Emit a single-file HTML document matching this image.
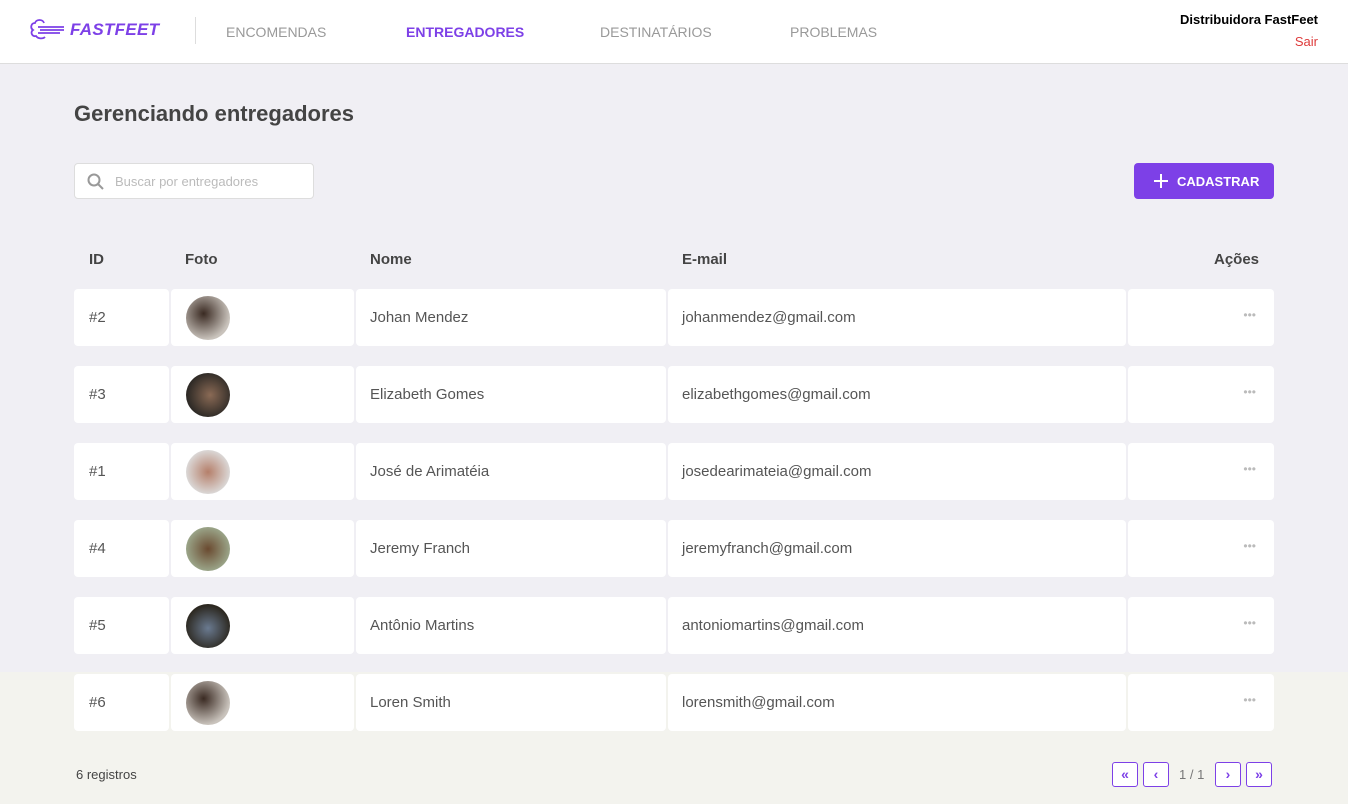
<!DOCTYPE html>
<html><head><meta charset="utf-8"><style>
*{box-sizing:border-box;margin:0;padding:0}
body{width:1348px;height:804px;overflow:hidden;font-family:"Liberation Sans",Arial,sans-serif;background:linear-gradient(#f0eff4 0,#f0eff4 672px,#f3f3ee 672px);position:relative;color:#444}
header{position:absolute;left:0;top:0;width:1348px;height:64px;background:#fff;border-bottom:1px solid #ddd}
.logo{position:absolute;left:30px;top:17px;display:flex;align-items:center;color:#7d40e7;font-weight:bold;font-style:italic;font-size:17px;letter-spacing:.3px}
.sep{position:absolute;left:195px;top:17px;width:1px;height:27px;background:#ddd}
nav a{position:absolute;top:24px;font-size:14px;color:#999;text-decoration:none}
.user{position:absolute;right:30px;top:12px;text-align:right;font-size:13px}
.user b{color:#000;display:block}
.user span{color:#de3b3b;font-size:13px;display:block;margin-top:7px}
h1{position:absolute;left:74px;top:101px;font-size:22px;color:#444}
.search{position:absolute;left:74px;top:163px;width:240px;height:36px;background:#fff;border:1px solid #ddd;border-radius:4px;font-size:13px;color:#bbb;padding:10px 0 0 40px}
.btn{position:absolute;left:1134px;top:163px;width:140px;height:36px;background:#7d40e7;border-radius:4px;color:#fff;font-weight:bold;font-size:13px;padding:11px 0 0 43px}
.th{position:absolute;top:251px;font-weight:bold;font-size:15px;color:#444}
.row{position:absolute;left:74px;width:1200px;height:57px}
.c{position:absolute;top:0;height:57px;background:#fff;border-radius:4px;font-size:15px;color:#555;padding-top:20px}
.av{position:absolute;left:15px;top:7px;width:44px;height:44px;border-radius:50%}
.dots{position:absolute;right:18px;top:19px;color:#bbb;font-size:12px;letter-spacing:0px}
.foot{position:absolute;left:76px;top:767px;font-size:13px;color:#444}
.pb{position:absolute;top:762px;width:26px;height:25px;border:1px solid #7d40e7;border-radius:3px;background:#fff;color:#7d40e7;font-weight:bold;font-size:14px;text-align:center;line-height:22px}
</style></head><body>
<header>
<div class="logo"><svg width="40" height="26" viewBox="0 0 40 26" fill="none" stroke="#7d40e7" stroke-width="1.8"><path d="M14 6c-1-4-8-4-9 0-4 0-5 5-2 7-3 2-1 7 3 6 2 3 7 3 9 1"/><path d="M8 10h26M10 13h24M8 16h22"/></svg><span style="margin-left:0">FASTFEET</span></div>
<div class="sep"></div>
<nav><a style="left:226px">ENCOMENDAS</a><a style="left:406px;color:#7d40e7;font-weight:bold">ENTREGADORES</a><a style="left:600px">DESTINATÁRIOS</a><a style="left:790px">PROBLEMAS</a></nav>
<div class="user"><b>Distribuidora FastFeet</b><span>Sair</span></div>
</header>
<h1>Gerenciando entregadores</h1>
<div class="search"><svg style="position:absolute;left:12px;top:9px" width="17" height="17" viewBox="0 0 17 17" fill="none" stroke="#999" stroke-width="2"><circle cx="7" cy="7" r="5.5"/><path d="M11 11l5 5"/></svg>Buscar por entregadores</div>
<div class="btn"><svg style="position:absolute;left:20px;top:11px" width="14" height="14" viewBox="0 0 14 14" stroke="#fff" stroke-width="2"><path d="M7 0v14M0 7h14"/></svg>CADASTRAR</div>
<div class="th" style="left:89px">ID</div><div class="th" style="left:185px">Foto</div><div class="th" style="left:370px">Nome</div><div class="th" style="left:682px">E-mail</div><div class="th" style="left:1214px">Ações</div>
<div class="row" style="top:289px"><div class="c" style="left:0;width:95px;padding-left:15px">#2</div><div class="c" style="left:97px;width:183px"><div class="av" style="background:radial-gradient(circle at 40% 40%,#3a2a22,#c9c3bc 70%)"></div></div><div class="c" style="left:282px;width:310px;padding-left:14px">Johan Mendez</div><div class="c" style="left:594px;width:458px;padding-left:14px">johanmendez@gmail.com</div><div class="c" style="left:1054px;width:146px"><span class="dots">•••</span></div></div>
<div class="row" style="top:366px"><div class="c" style="left:0;width:95px;padding-left:15px">#3</div><div class="c" style="left:97px;width:183px"><div class="av" style="background:radial-gradient(circle at 55% 50%,#8a6a55,#2e2a26 70%)"></div></div><div class="c" style="left:282px;width:310px;padding-left:14px">Elizabeth Gomes</div><div class="c" style="left:594px;width:458px;padding-left:14px">elizabethgomes@gmail.com</div><div class="c" style="left:1054px;width:146px"><span class="dots">•••</span></div></div>
<div class="row" style="top:443px"><div class="c" style="left:0;width:95px;padding-left:15px">#1</div><div class="c" style="left:97px;width:183px"><div class="av" style="background:radial-gradient(circle at 50% 50%,#b57f6a,#ddd 75%)"></div></div><div class="c" style="left:282px;width:310px;padding-left:14px">José de Arimatéia</div><div class="c" style="left:594px;width:458px;padding-left:14px">josedearimateia@gmail.com</div><div class="c" style="left:1054px;width:146px"><span class="dots">•••</span></div></div>
<div class="row" style="top:520px"><div class="c" style="left:0;width:95px;padding-left:15px">#4</div><div class="c" style="left:97px;width:183px"><div class="av" style="background:radial-gradient(circle at 50% 50%,#6a4a30,#9aa488 70%)"></div></div><div class="c" style="left:282px;width:310px;padding-left:14px">Jeremy Franch</div><div class="c" style="left:594px;width:458px;padding-left:14px">jeremyfranch@gmail.com</div><div class="c" style="left:1054px;width:146px"><span class="dots">•••</span></div></div>
<div class="row" style="top:597px"><div class="c" style="left:0;width:95px;padding-left:15px">#5</div><div class="c" style="left:97px;width:183px"><div class="av" style="background:radial-gradient(circle at 50% 55%,#6a7a90,#2c2820 70%)"></div></div><div class="c" style="left:282px;width:310px;padding-left:14px">Antônio Martins</div><div class="c" style="left:594px;width:458px;padding-left:14px">antoniomartins@gmail.com</div><div class="c" style="left:1054px;width:146px"><span class="dots">•••</span></div></div>
<div class="row" style="top:674px"><div class="c" style="left:0;width:95px;padding-left:15px">#6</div><div class="c" style="left:97px;width:183px"><div class="av" style="background:radial-gradient(circle at 40% 40%,#3a2a22,#c9c3bc 70%)"></div></div><div class="c" style="left:282px;width:310px;padding-left:14px">Loren Smith</div><div class="c" style="left:594px;width:458px;padding-left:14px">lorensmith@gmail.com</div><div class="c" style="left:1054px;width:146px"><span class="dots">•••</span></div></div>
<div class="foot">6 registros</div>
<div class="pb" style="left:1112px">«</div><div class="pb" style="left:1143px">‹</div>
<div style="position:absolute;left:1179px;top:767px;font-size:13px;color:#777">1 / 1</div>
<div class="pb" style="left:1215px">›</div><div class="pb" style="left:1246px">»</div>
</body></html>
